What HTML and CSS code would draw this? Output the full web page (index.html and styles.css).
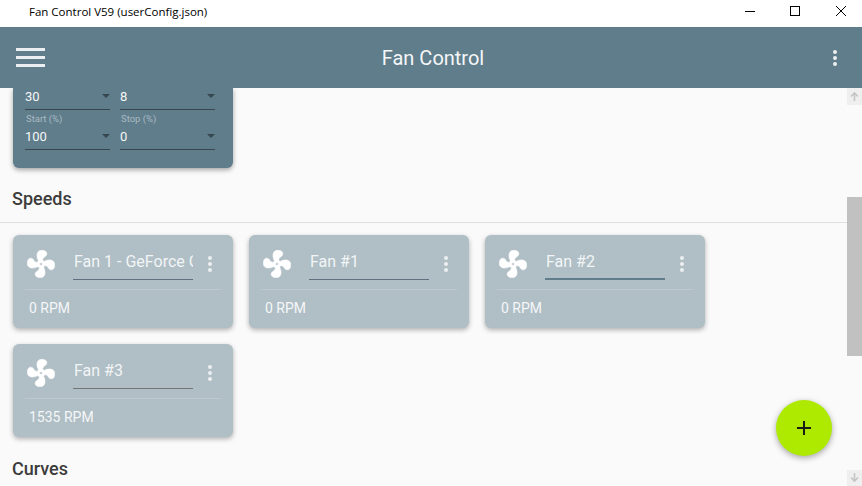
FILE: index.html
```html
<!DOCTYPE html>
<html lang="en">
<head>
    <meta charset="UTF-8">
    <meta name="viewport" content="width=device-width, initial-scale=1.0">
    <title>Fan Control V59 (userConfig.json)</title>
    <link rel="stylesheet" href="styles.css">
</head>
<body>
    <svg class="defs" width="0" height="0">
        <symbol id="fan" viewBox="1.8 1.8 20.4 20.4">
            <path fill-rule="evenodd" d="M12,11A1,1 0 0,0 11,12A1,1 0 0,0 12,13A1,1 0 0,0 13,12A1,1 0 0,0 12,11M12.5,2C17,2 17.11,5.57 14.75,6.75C13.76,7.24 13.32,8.29 13.13,9.22C13.61,9.42 14.03,9.73 14.35,10.13C18.05,8.13 22.03,8.92 22.03,12.5C22.03,17 18.46,17.1 17.28,14.73C16.78,13.74 15.72,13.3 14.79,13.11C14.59,13.59 14.28,14 13.88,14.34C15.87,18.03 15.08,22 11.5,22C7,22 6.91,18.42 9.27,17.24C10.25,16.75 10.69,15.71 10.89,14.79C10.4,14.59 9.97,14.27 9.65,13.87C5.96,15.85 2,15.07 2,11.5C2,7 5.56,6.89 6.74,9.26C7.24,10.25 8.29,10.68 9.22,10.87C9.41,10.39 9.73,9.97 10.14,9.65C8.15,5.96 8.94,2 12.5,2Z"/>
        </symbol>
    </svg>

    <div class="titlebar">
        <span class="window-title">Fan Control V59 (userConfig.json)</span>
        <div class="window-buttons">
            <svg width="46" height="27" viewBox="0 0 46 27"><path d="M19 11.5H29" stroke="#000" fill="none"/></svg>
            <svg width="46" height="27" viewBox="0 0 46 27"><rect x="18.5" y="6.5" width="9" height="9" stroke="#000" fill="none"/></svg>
            <svg width="46" height="27" viewBox="0 0 46 27"><path d="M18 6L28 16M28 6L18 16" stroke="#000" fill="none"/></svg>
        </div>
    </div>

    <header class="appbar">
        <div class="hamburger"><span></span><span></span><span></span></div>
        <h1 class="app-title">Fan Control</h1>
        <div class="kebab kebab-top"><span></span><span></span><span></span></div>
    </header>

    <div class="main">
        <div class="content">
            <div class="control-card">
                <div class="field-row">
                    <div class="field field-a"><div class="select"><span>30</span><i></i></div></div>
                    <div class="field field-b"><div class="select"><span>8</span><i></i></div></div>
                </div>
                <div class="field-row">
                    <div class="field field-a"><label>Start (%)</label><div class="select"><span>100</span><i></i></div></div>
                    <div class="field field-b"><label>Stop (%)</label><div class="select"><span>0</span><i></i></div></div>
                </div>
            </div>

            <h2 class="section-title">Speeds</h2>
            <div class="section-line"></div>

            <div class="cards">
                <div class="fan-card">
                    <div class="fan-top">
                        <svg class="fan-icon"><use href="#fan"/></svg>
                        <div class="fan-name">Fan 1 - GeForce GTX 1080</div>
                        <div class="kebab"><span></span><span></span><span></span></div>
                    </div>
                    <div class="fan-value">0 RPM</div>
                </div>
                <div class="fan-card">
                    <div class="fan-top">
                        <svg class="fan-icon"><use href="#fan"/></svg>
                        <div class="fan-name">Fan #1</div>
                        <div class="kebab"><span></span><span></span><span></span></div>
                    </div>
                    <div class="fan-value">0 RPM</div>
                </div>
                <div class="fan-card">
                    <div class="fan-top">
                        <svg class="fan-icon"><use href="#fan"/></svg>
                        <div class="fan-name focused">Fan #2</div>
                        <div class="kebab"><span></span><span></span><span></span></div>
                    </div>
                    <div class="fan-value">0 RPM</div>
                </div>
                <div class="fan-card">
                    <div class="fan-top">
                        <svg class="fan-icon"><use href="#fan"/></svg>
                        <div class="fan-name grey">Fan #3</div>
                        <div class="kebab"><span></span><span></span><span></span></div>
                    </div>
                    <div class="fan-value">1535 RPM</div>
                </div>
            </div>

            <h2 class="section-title curves">Curves</h2>
        </div>

        <div class="scrollbar">
            <div class="scroll-btn">
                <svg width="15" height="17" viewBox="0 0 15 17"><path d="M7.5 13V5M4 8.5L7.5 5L11 8.5" stroke="#c4c4c4" stroke-width="1.6" fill="none"/></svg>
            </div>
            <div class="scroll-thumb"></div>
            <div class="scroll-btn scroll-btn-end">
                <svg width="15" height="16" viewBox="0 0 15 16"><path d="M7.5 3V11M4 7.5L7.5 11L11 7.5" stroke="#c4c4c4" stroke-width="1.6" fill="none"/></svg>
            </div>
        </div>

        <button class="fab"><svg width="14" height="14" viewBox="0 0 14 14"><path d="M7 0V14M0 7H14" stroke="#1c1c1c" stroke-width="2" fill="none"/></svg></button>
    </div>
</body>
</html>
```

FILE: styles.css
```css
html, body {
    margin: 0;
    padding: 0;
    height: 100%;
}
body {
    width: 862px;
    height: 486px;
    overflow: hidden;
    display: flex;
    flex-direction: column;
    font-family: 'Roboto', sans-serif;
    background-color: #fafafa;
    color: #333;
}
.defs {
    position: absolute;
}
.titlebar {
    height: 27px;
    flex: none;
    display: flex;
    justify-content: space-between;
    align-items: flex-start;
    background-color: #fff;
}
.window-title {
    margin-left: 29px;
    margin-top: 4px;
    font-family: 'Open Sans', sans-serif;
    font-size: 11.5px;
    line-height: 16px;
    color: #000;
}
.window-buttons {
    display: flex;
    margin-right: -2px;
}
.appbar {
    height: 61px;
    flex: none;
    display: flex;
    align-items: center;
    position: relative;
    z-index: 2;
    background-color: #607d8b;
    padding: 0 25px 0 16px;
}
.hamburger {
    width: 29px;
    display: flex;
    flex-direction: column;
    gap: 5px;
}
.hamburger span {
    display: block;
    height: 3px;
    background-color: #eceff1;
}
.app-title {
    flex: 1;
    margin: 0 12px 0 0;
    text-align: center;
    font-size: 20px;
    font-weight: 400;
    color: #f5f7f8;
}
.kebab {
    width: 4px;
    flex: none;
    display: flex;
    flex-direction: column;
    gap: 2px;
}
.kebab span {
    width: 4px;
    height: 4px;
    border-radius: 50%;
    background-color: #eceff1;
}
.main {
    flex: 1;
    display: flex;
    position: relative;
    min-height: 0;
}
.content {
    flex: 1;
    overflow: hidden;
}
.control-card {
    width: 220px;
    height: 80px;
    box-sizing: border-box;
    margin-left: 13px;
    padding: 0 12px;
    background-color: #607d8b;
    border-radius: 0 0 6px 6px;
    box-shadow: 0 2px 5px rgba(0, 0, 0, 0.35);
}
.field-row {
    display: flex;
    gap: 10px;
}
.field-a {
    width: 85px;
}
.field-b {
    width: 95px;
}
.field label {
    display: block;
    height: 11px;
    margin: 3px 0 4px 1px;
    font-size: 9.5px;
    line-height: 11px;
    color: #a9bac3;
}
.select {
    height: 21px;
    display: flex;
    justify-content: space-between;
    align-items: flex-start;
    border-bottom: 1px solid #37474f;
    font-size: 13px;
    line-height: 18px;
    color: #f5f7f8;
}
.select i {
    width: 0;
    height: 0;
    border-left: 4px solid transparent;
    border-right: 4px solid transparent;
    border-top: 4px solid #37474f;
    margin-top: 6px;
}
.section-title {
    margin: 21px 0 0 12px;
    font-size: 18px;
    line-height: 20px;
    font-weight: 500;
    color: #3c3c3c;
}
.section-line {
    height: 1px;
    margin-top: 13px;
    margin-right: -15px;
    background-color: #e0e0e0;
}
.cards {
    display: flex;
    flex-wrap: wrap;
    gap: 16px;
    margin: 12px 0 0 13px;
}
.fan-card {
    width: 220px;
    height: 93px;
    box-sizing: border-box;
    padding: 0 12px;
    background-color: #b0bec5;
    border-radius: 6px;
    box-shadow: 0 2px 5px rgba(0, 0, 0, 0.3);
}
.fan-top {
    height: 55px;
    display: flex;
    align-items: flex-start;
    border-bottom: 1px solid #bdc9cf;
    box-sizing: border-box;
}
.fan-icon {
    width: 28px;
    height: 28px;
    flex: none;
    margin: 15px 0 0 2px;
    fill: #fff;
    stroke: #fff;
    stroke-width: 0.4;
}
.fan-name {
    width: 120px;
    height: 30px;
    flex: none;
    box-sizing: border-box;
    margin: 15px 0 0 18px;
    padding-left: 1px;
    overflow: hidden;
    white-space: nowrap;
    border-bottom: 1px solid #607080;
    font-size: 16px;
    line-height: 24px;
    color: #f2f5f6;
}
.fan-name.focused {
    border-bottom: 2px solid #607d8b;
}
.fan-name.grey {
    border-bottom-color: #757575;
}
.fan-card .kebab {
    margin: 21px 0 0 15px;
}
.fan-value {
    padding: 9px 0 0 4px;
    font-size: 14px;
    line-height: 18px;
    color: #f5f7f8;
}
.curves {
    margin-top: 22px;
}
.scrollbar {
    width: 15px;
    flex: none;
    display: flex;
    flex-direction: column;
    position: relative;
    z-index: 1;
}
.scroll-btn {
    height: 17px;
    background-color: #efefef;
    display: flex;
}
.scroll-thumb {
    height: 159px;
    margin-top: 92px;
    background-color: #c1c1c1;
}
.scroll-btn-end {
    height: 16px;
    margin-top: auto;
}
.fab {
    position: absolute;
    left: 776px;
    top: 312px;
    width: 56px;
    height: 56px;
    padding: 0;
    border: none;
    border-radius: 50%;
    background-color: #aeea00;
    box-shadow: 0 2px 6px rgba(0, 0, 0, 0.35);
    display: flex;
    align-items: center;
    justify-content: center;
    z-index: 3;
}
```
